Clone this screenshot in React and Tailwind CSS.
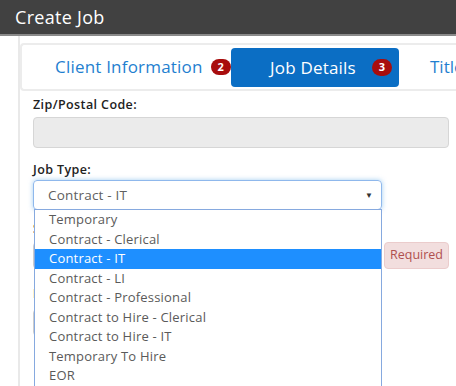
import React from "react";

const items = [
  "Temporary",
  "Contract - Clerical",
  "Contract - IT",
  "Contract - LI",
  "Contract - Professional",
  "Contract to Hire - Clerical",
  "Contract to Hire - IT",
  "Temporary To Hire",
  "EOR",
];

export default function App() {
  return (
    <div
      className="w-[456px] h-[386px] overflow-hidden bg-white relative"
      style={{ fontFamily: '"Open Sans", "Liberation Sans", sans-serif' }}
    >
      <div className="h-[36px] bg-[#414141] border-b-2 border-[#8a8a8a] flex items-center pl-[15px] text-white text-[18px] font-medium tracking-[0.3px]">
        Create Job
      </div>
      <div className="ml-[18px] border-l-2 border-[#e9e9e9] h-[400px] pt-[7px]">
        <div className="h-[48px] border-2 border-r-0 border-[#ececec] rounded-l-[4px] flex items-center">
          <div className="flex items-center pl-[33px] w-[209px] shrink-0">
            <span className="text-[17px] text-[#1f7fd0] tracking-[0.2px]">Client Information</span>
            <span className="ml-[8px] w-[20px] h-[16px] shrink-0 rounded-full bg-[#a80d0d] text-white text-[11px] font-bold flex items-center justify-center">
              2
            </span>
          </div>
          <div className="mt-[1px] w-[168px] h-[39px] shrink-0 bg-[#0b6ec4] rounded-[4px] flex items-center pl-[39px]">
            <span className="text-[17px] text-white tracking-[0.2px]">Job Details</span>
            <span className="ml-[16px] w-[20px] h-[17px] shrink-0 rounded-full bg-[#a80d0d] text-white text-[11px] font-bold flex items-center justify-center">
              3
            </span>
          </div>
          <div className="ml-[31px] text-[17px] text-[#1f7fd0] shrink-0">Title</div>
        </div>

        <div className="pl-[13px] pt-[4px]">
          <div className="text-[12.5px] font-semibold text-[#222] h-[20px] leading-[20px] tracking-[0.4px]">Zip/Postal Code:</div>
          <div className="mt-[2px] w-[416px] h-[31px] bg-[#ebebeb] border border-[#d6d6d6] rounded-[4px]" />
          <div className="mt-[12px] text-[12.5px] font-semibold text-[#222] h-[20px] leading-[20px] tracking-[0.4px]">Job Type:</div>
          <div className="relative w-[349px]">
            <div className="h-[30px] border border-[#8fb8ec] rounded-[4px] shadow-[0_0_5px_rgba(102,175,233,0.6)] flex items-center pl-[14px] pr-[8px] text-[13.5px] text-[#606060] tracking-[0.2px]">
              <span className="flex-1">Contract - IT</span>
              <span className="text-[8px] text-[#333]">▼</span>
            </div>
            <div className="mt-[10px] text-[12px] font-semibold text-[#222]">Salary:</div>
            <div className="mt-[4px] flex items-center w-[420px]">
              <div className="w-[349px] h-[27px] shrink-0 border border-[#ccc] rounded-[4px]" />
              <div className="ml-[2px] w-[65px] h-[27px] shrink-0 bg-[#f2dede] border border-[#ebcccc] rounded-[4px] text-[12.5px] text-[#b0504e] flex items-center justify-center">
                Required
              </div>
            </div>
            <div className="mt-[16px] text-[12px] font-semibold text-[#222]">Rate:</div>
            <div className="mt-[6px] w-[349px] h-[27px] border border-[#ccc] rounded-[4px]" />

            <div className="absolute left-[1px] top-[29px] w-[348px] h-[200px] bg-white border border-[#86a9df] text-[13px] text-[#5a5a5a] tracking-[0.2px]">
              {items.map((it) => (
                <div
                  key={it}
                  className={
                    "h-[19.5px] leading-[19.5px] pl-[14px] " +
                    (it === "Contract - IT" ? "bg-[#1e8fff] text-white" : "")
                  }
                >
                  {it}
                </div>
              ))}
            </div>
          </div>
        </div>
      </div>
    </div>
  );
}
